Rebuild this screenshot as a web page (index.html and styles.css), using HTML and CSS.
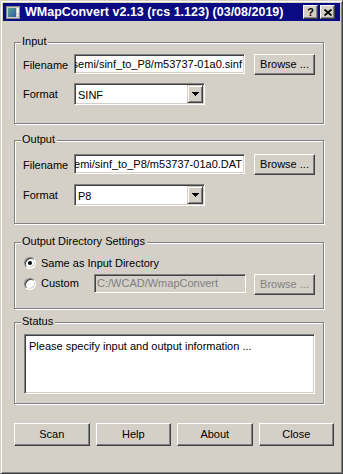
FILE: index.html
```html
<!DOCTYPE html>
<html>
<head>
<meta charset="utf-8">
<link rel="stylesheet" href="styles.css">
</head>
<body>
<div class="window">
  <div class="titlebar">
    <svg class="appicon" width="14" height="13" viewBox="0 0 14 13">
      <defs>
        <linearGradient id="ig" x1="0" y1="0" x2="1" y2="1">
          <stop offset="0" stop-color="#5aa58f"/>
          <stop offset="1" stop-color="#2d5aa8"/>
        </linearGradient>
      </defs>
      <rect x="0.5" y="0.5" width="13" height="12" fill="#cfcbc3" stroke="#8c8c8c"/>
      <rect x="2" y="2" width="8" height="9" fill="url(#ig)"/>
      <rect x="11" y="2" width="1.5" height="5" fill="#ffffff"/>
      <rect x="11" y="8.5" width="1.5" height="1.5" fill="#ffffff"/>
    </svg>
    <span class="title">WMapConvert v2.13 (rcs 1.123) (03/08/2019)</span>
    <div class="capbtns">
      <span class="capbtn">?</span>
      <span class="capbtn">
        <svg width="8" height="7" viewBox="0 0 8 7"><path d="M0.5 0.5 L7.5 6.5 M7.5 0.5 L0.5 6.5" stroke="#000" stroke-width="1.8"/></svg>
      </span>
    </div>
  </div>

  <div class="client">
    <div class="group g-input">
      <span class="legend">Input</span>
      <div class="row">
        <span class="label">Filename</span>
        <div class="edit"><span class="edit-text">semi/sinf_to_P8/m53737-01a0.sinf</span></div>
        <div class="btn browse">Browse ...</div>
      </div>
      <div class="row r2">
        <span class="label">Format</span>
        <div class="combo">
          <span class="combo-text">SINF</span>
          <span class="drop"><svg width="7" height="4" viewBox="0 0 7 4"><rect x="0" y="0" width="7" height="1"/><rect x="1" y="1" width="5" height="1"/><rect x="2" y="2" width="3" height="1"/><rect x="3" y="3" width="1" height="1"/></svg></span>
        </div>
      </div>
    </div>

    <div class="group g-output">
      <span class="legend">Output</span>
      <div class="row">
        <span class="label">Filename</span>
        <div class="edit"><span class="edit-text">semi/sinf_to_P8/m53737-01a0.DAT</span></div>
        <div class="btn browse">Browse ...</div>
      </div>
      <div class="row r2">
        <span class="label">Format</span>
        <div class="combo">
          <span class="combo-text">P8</span>
          <span class="drop"><svg width="7" height="4" viewBox="0 0 7 4"><rect x="0" y="0" width="7" height="1"/><rect x="1" y="1" width="5" height="1"/><rect x="2" y="2" width="3" height="1"/><rect x="3" y="3" width="1" height="1"/></svg></span>
        </div>
      </div>
    </div>

    <div class="group g-dir">
      <span class="legend">Output Directory Settings</span>
      <div class="rrow1">
        <span class="radio"><span class="dot"></span></span>
        <span>Same as Input Directory</span>
      </div>
      <div class="rrow2">
        <div class="radio-opt">
          <span class="radio"></span>
          <span>Custom</span>
        </div>
        <div class="edit disabled"><span class="edit-text">C:/WCAD/WmapConvert</span></div>
        <div class="btn browse browse-dis">Browse ...</div>
      </div>
    </div>

    <div class="group g-status">
      <span class="legend">Status</span>
      <div class="status-box">Please specify input and output information ...</div>
    </div>

    <div class="buttons">
      <div class="btn big">Scan</div>
      <div class="btn big">Help</div>
      <div class="btn big">About</div>
      <div class="btn big">Close</div>
    </div>
  </div>
</div>
</body>
</html>
```

FILE: styles.css
```css
* { box-sizing: border-box; }
html, body { margin: 0; padding: 0; overflow: hidden; }
body {
  background: #d4d0c8;
  font-family: "Liberation Sans", Arial, sans-serif;
  font-size: 11px;
  line-height: 13px;
  color: #000;
}
.window {
  width: 343px;
  height: 474px;
  border: 1px solid;
  border-color: #d4d0c8 #404040 #404040 #d4d0c8;
  box-shadow: inset 1px 1px #ffffff, inset -1px -1px #808080;
  padding: 2px;
  background: #d4d0c8;
}
.titlebar {
  height: 18px;
  background: #0a0a82;
  color: #fff;
  display: flex;
  align-items: center;
  padding: 0 5px 0 3px;
}
.appicon { flex: none; margin-right: 5px; }
.title {
  flex: 1;
  font-weight: bold;
  font-size: 12.5px;
  line-height: 15px;
  white-space: nowrap;
  align-self: flex-start;
  margin-top: 2px;
}
.capbtns { display: flex; gap: 2px; }
.capbtn {
  width: 15px;
  height: 14px;
  background: #d4d0c8;
  border: 1px solid;
  border-color: #ffffff #404040 #404040 #ffffff;
  box-shadow: inset -1px -1px #808080;
  display: flex;
  align-items: center;
  justify-content: center;
  color: #000;
  font-weight: bold;
  font-size: 11px;
  line-height: 12px;
}
.client { padding-left: 11px; }
.group {
  position: relative;
  width: 310px;
  border: 1px solid #808080;
  box-shadow: inset 1px 1px #ffffff, 1px 1px #ffffff;
  padding-left: 8px;
}
.legend {
  position: absolute;
  top: -8px;
  left: 6px;
  padding: 0 2px 0 1px;
  background: #d4d0c8;
  white-space: nowrap;
}
.g-input { margin-top: 21px; height: 82px; padding-top: 11px; }
.g-output { margin-top: 16px; height: 84px; padding-top: 13px; }
.g-dir { margin-top: 18px; height: 67px; padding-top: 12px; padding-left: 9px; }
.g-status { margin-top: 13px; height: 82px; padding-top: 11px; padding-left: 9px; }

.row { display: flex; align-items: flex-start; }
.r2 { margin-top: 8px; }
.g-output .r2 { margin-top: 9px; }
.label { width: 51px; padding-top: 5px; white-space: nowrap; }

.edit {
  width: 171px;
  height: 20px;
  background: #fff;
  border: 1px solid;
  border-color: #808080 #ffffff #ffffff #808080;
  box-shadow: inset 1px 1px #404040, inset -1px -1px #d4d0c8;
  display: flex;
  align-items: center;
  justify-content: flex-end;
  overflow: hidden;
  white-space: nowrap;
  padding-right: 2px;
}
.edit-text { flex: none; }
.edit.disabled {
  width: 152px;
  height: 19px;
  background: #d4d0c8;
  color: #808080;
  justify-content: flex-start;
  padding-left: 2px;
}
.btn {
  background: #d4d0c8;
  border: 1px solid;
  border-color: #ffffff #404040 #404040 #ffffff;
  box-shadow: inset -1px -1px #808080;
  display: flex;
  align-items: center;
  justify-content: center;
  white-space: nowrap;
}
.browse { width: 61px; height: 21px; margin-left: 9px; }
.browse-dis { margin-left: 8px; color: #808080; }

.combo {
  width: 131px;
  height: 22px;
  background: #fff;
  border: 1px solid;
  border-color: #808080 #ffffff #ffffff #808080;
  box-shadow: inset 1px 1px #404040, inset -1px -1px #d4d0c8;
  padding: 1px;
  display: flex;
}
.combo-text { flex: 1; padding: 4px 0 0 2px; }
.drop {
  width: 16px;
  height: 18px;
  background: #d4d0c8;
  border: 1px solid;
  border-color: #d4d0c8 #404040 #404040 #d4d0c8;
  box-shadow: inset 1px 1px #ffffff, inset -1px -1px #808080;
  display: flex;
  align-items: center;
  justify-content: center;
}
.drop svg { fill: #000; display: block; }

.rrow1 { height: 16px; display: flex; align-items: center; }
.rrow2 { display: flex; align-items: flex-start; margin-top: 3px; }
.radio-opt { width: 70px; height: 19px; display: flex; align-items: center; }
.radio {
  flex: none;
  width: 12px;
  height: 12px;
  border-radius: 50%;
  border: 1px solid;
  border-color: #808080 #ffffff #ffffff #808080;
  box-shadow: inset 1px 1px #404040, inset -1px -1px #d4d0c8;
  background: #fff;
  display: flex;
  align-items: center;
  justify-content: center;
  margin-right: 5px;
}
.dot { width: 4px; height: 4px; border-radius: 50%; background: #000; }

.status-box {
  width: 291px;
  height: 60px;
  background: #fff;
  border: 1px solid;
  border-color: #808080 #ffffff #ffffff #808080;
  box-shadow: inset 1px 1px #404040, inset -1px -1px #d4d0c8;
  padding: 5px 4px;
  white-space: nowrap;
}

.buttons { display: flex; gap: 6px; width: 320px; margin-top: 19px; }
.big { flex: 1; height: 23px; }
```
